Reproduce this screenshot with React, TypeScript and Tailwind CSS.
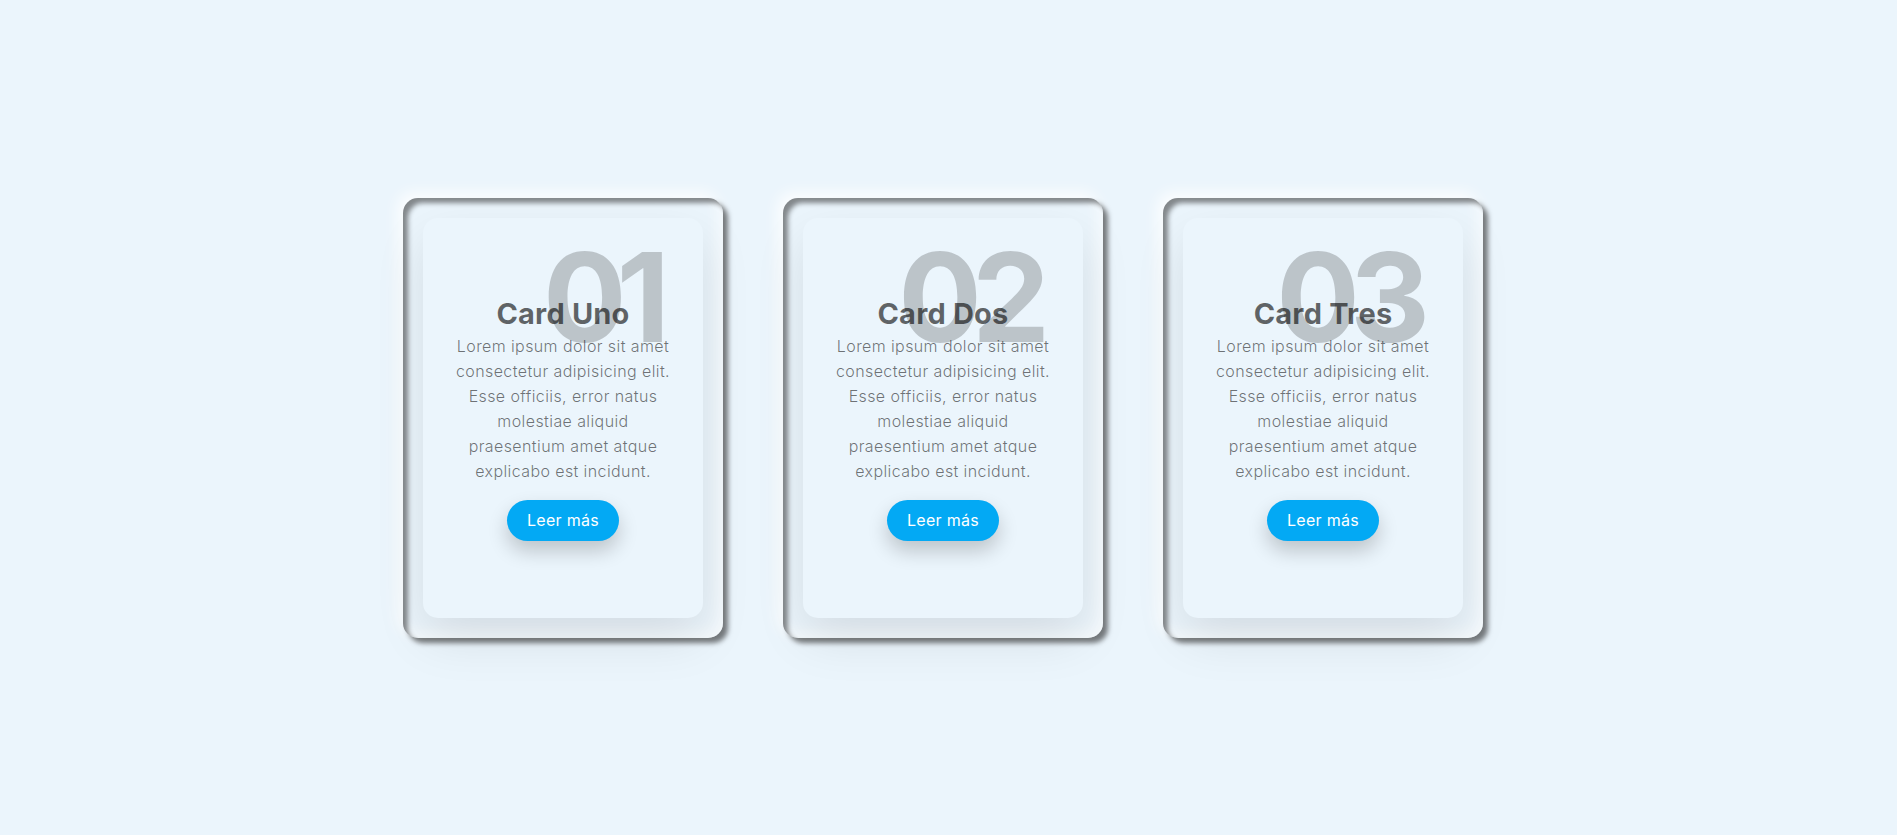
import React from 'react';

interface CardData {
  num: string;
  title: string;
}

const cards: CardData[] = [
  { num: '01', title: 'Card Uno' },
  { num: '02', title: 'Card Dos' },
  { num: '03', title: 'Card Tres' },
];

const lines = [
  'Lorem ipsum dolor sit amet',
  'consectetur adipisicing elit.',
  'Esse officiis, error natus',
  'molestiae aliquid',
  'praesentium amet atque',
  'explicabo est incidunt.',
];

const Card: React.FC<{ card: CardData }> = ({ card }) => (
  <div className="relative w-[320px] h-[440px] mx-[30px] rounded-[15px] shadow-[inset_5px_5px_5px_rgba(0,0,0,0.45),inset_-5px_-5px_15px_rgba(255,255,255,0.6),5px_5px_5px_rgba(0,0,0,0.5),-5px_-5px_15px_rgba(255,255,255,0.9)] p-5">
    <div className="relative h-full w-full rounded-[15px] bg-[#ebf5fc] border-2 border-[#ebf5fc] shadow-[0_20px_50px_rgba(0,0,0,0.1)] flex items-center justify-center">
      <h2 className="absolute top-[15px] right-[41px] text-[124px] leading-none font-bold text-black/20 tracking-[-10px]">
        {card.num}
      </h2>
      <div className="relative flex flex-col items-center text-center px-5">
        <h3 className="text-[29px] leading-[40px] font-bold text-black/60 tracking-[0.2px]">{card.title}</h3>
        <p className="text-[16px] leading-[25px] font-light text-black/55 tracking-[0.4px]">
          {lines.map((l, i) => (
            <span key={i} className="block whitespace-nowrap">{l}</span>
          ))}
        </p>
        <a
          href="#"
          className="mt-[16px] inline-block rounded-full bg-[#03a9f4] px-5 py-2 text-[16px] leading-[25px] text-white tracking-[0.3px] shadow-[0_10px_20px_rgba(0,0,0,0.2)]"
        >
          Leer más
        </a>
      </div>
    </div>
  </div>
);

export default function App() {
  return (
    <div
      className="min-h-screen w-full bg-[#ebf5fc] flex items-center justify-center pr-[11px]"
      style={{ fontFamily: 'Inter, "Noto Sans", sans-serif' }}
    >
      {cards.map((c) => (
        <Card key={c.num} card={c} />
      ))}
    </div>
  );
}
